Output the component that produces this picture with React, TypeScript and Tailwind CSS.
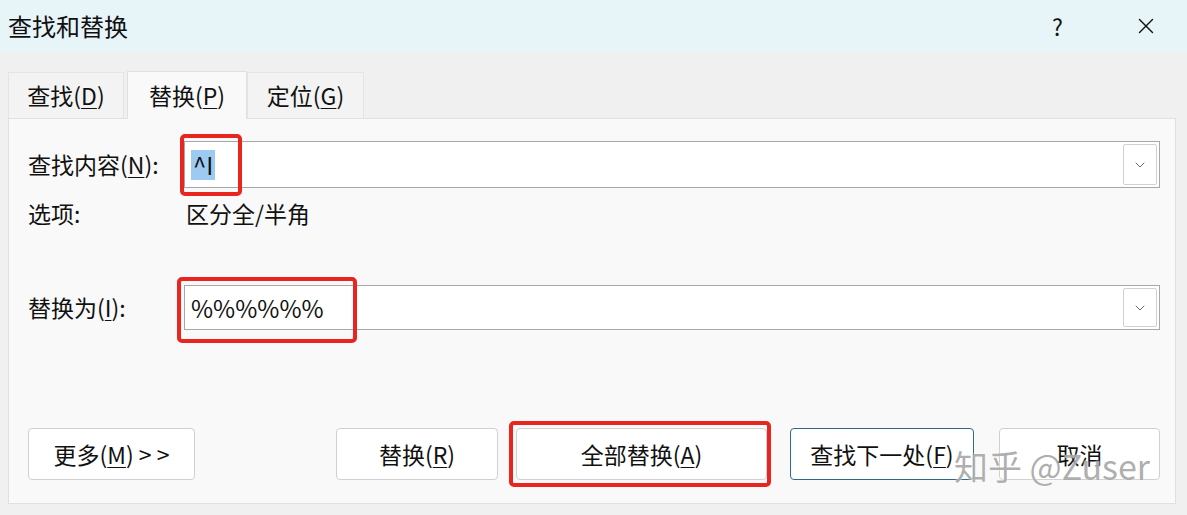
import { X, ChevronDown } from "lucide-react";

const font = { fontFamily: '"Noto Sans CJK SC", "Noto Sans", sans-serif' };

function Ul({ c }: { c: string }) {
  return <span className="underline underline-offset-[3px] decoration-1">{c}</span>;
}

function Combo({ children, h }: { children: React.ReactNode; h: string }) {
  return (
    <div className={`flex-1 ${h} bg-white border border-[#a8a8a8] flex items-center justify-between pl-[6px] pr-[2px]`}>
      <div className="flex items-center">{children}</div>
      <div className="w-[34px] h-[calc(100%-4px)] border border-[#d0d0d0] rounded-[2px] flex items-center justify-center">
        <ChevronDown size={16} strokeWidth={1.2} className="text-[#444]" />
      </div>
    </div>
  );
}

function Btn({ children, w, blue }: { children: React.ReactNode; w: string; blue?: boolean }) {
  return (
    <div
      className={`${w} h-[52px] bg-white rounded-[4px] border flex items-center justify-center text-[23px] text-[#111] ${
        blue ? "border-[#2d6a86]" : "border-[#d0d0d0]"
      }`}
    >
      {children}
    </div>
  );
}

export default function App() {
  return (
    <div className="relative w-[1187px] h-[515px] bg-[#f0f0f0] flex flex-col overflow-hidden" style={font}>
      <div className="h-[52px] bg-[#e7f4f8] flex items-center justify-between pl-[8px] pr-[28px]">
        <span className="text-[24px] text-[#111]">查找和替换</span>
        <div className="flex items-center gap-[70px]">
          <span className="text-[23px] text-[#111]">?</span>
          <X size={26} strokeWidth={1.3} className="text-[#111]" />
        </div>
      </div>

      <div className="flex-1 px-[8px] pt-[18px] pr-[11px]">
        <div className="flex items-end h-[48px] text-[23px] text-[#111]">
          <div className="w-[116px] h-[46px] bg-[#f3f3f3] border border-b-0 border-[#e4e4e4] flex items-center justify-center mr-[3px]">
            查找(<Ul c="D" />)
          </div>
          <div className="w-[120px] h-[48px] bg-[#f9f9f9] border border-b-0 border-[#e0e0e0] flex items-center justify-center relative z-10 -mb-px">
            替换(<Ul c="P" />)
          </div>
          <div className="w-[117px] h-[46px] bg-[#f3f3f3] border border-b-0 border-[#e4e4e4] flex items-center justify-center">
            定位(<Ul c="G" />)
          </div>
        </div>

        <div className="h-[386px] bg-[#f9f9f9] border border-[#e0e0e0] pl-[19px] pr-[15px] pt-[22px] flex flex-col text-[23px] text-[#111]">
          <div className="flex items-center">
            <div className="w-[156px]">
              查找内容(<Ul c="N" />):
            </div>
            <Combo h="h-[47px]">
              <span className="bg-[#9ccaf0] px-[2px] leading-[30px] text-[24px]">^I</span>
            </Combo>
          </div>
          <div className="flex items-center mt-[10px] h-[30px]">
            <div className="w-[158px]">选项:</div>
            <div>区分全/半角</div>
          </div>

          <div className="flex items-center mt-[57px]">
            <div className="w-[156px]">
              替换为(<Ul c="I" />):
            </div>
            <Combo h="h-[45px]">
              <span className="text-[24px]">%%%%%%</span>
            </Combo>
          </div>

          <div className="flex items-center mt-[98px]">
            <Btn w="w-[167px]">
              更多(<Ul c="M" />)&nbsp;&gt; &gt;
            </Btn>
            <div className="w-[141px]" />
            <Btn w="w-[162px]">
              替换(<Ul c="R" />)
            </Btn>
            <div className="w-[18px]" />
            <Btn w="w-[251px]">
              全部替换(<Ul c="A" />)
            </Btn>
            <div className="w-[23px]" />
            <Btn w="w-[184px]" blue>
              查找下一处(<Ul c="F" />)
            </Btn>
            <div className="w-[25px]" />
            <Btn w="w-[161px]">取消</Btn>
          </div>
        </div>
      </div>

      {/* red annotation boxes */}
      <div className="absolute left-[180px] top-[134px] w-[62px] h-[62px] border-[4px] border-[#e8261f] rounded-[5px]" />
      <div className="absolute left-[177px] top-[277px] w-[180px] h-[66px] border-[4px] border-[#e8261f] rounded-[5px]" />
      <div className="absolute left-[509px] top-[421px] w-[262px] h-[66px] border-[4px] border-[#e8261f] rounded-[5px]" />

      {/* watermark */}
      <div className="absolute left-[954px] top-[440px] text-[34px] text-[#8c8c8c]/70 [text-shadow:0_0_2px_white]">
        知乎 @Zuser
      </div>
    </div>
  );
}
